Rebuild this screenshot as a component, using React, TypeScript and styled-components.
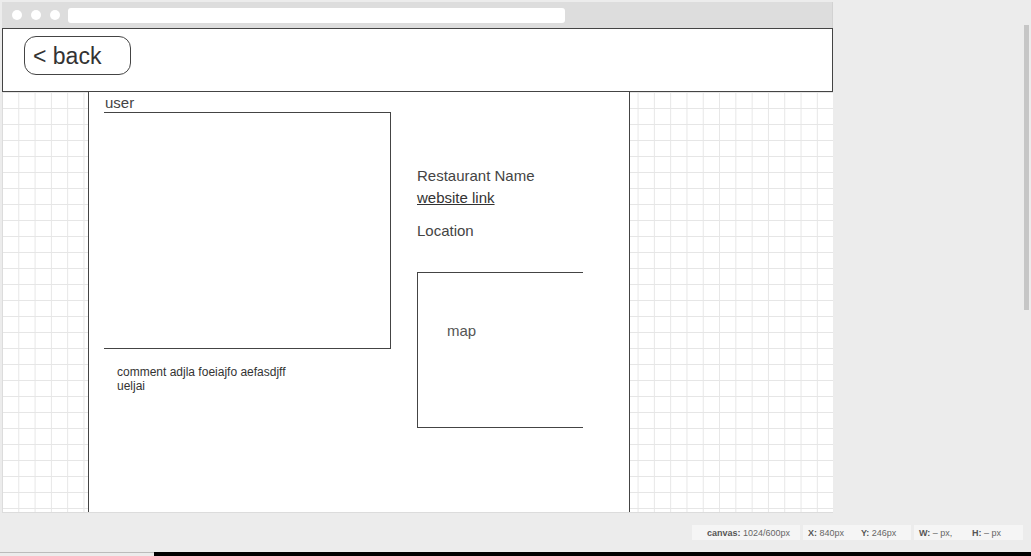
import React from "react";
import styled, { createGlobalStyle } from "styled-components";

const Global = createGlobalStyle`
  html, body { margin: 0; padding: 0; background: #ececec; }
  body { font-family: "Liberation Sans", Arial, sans-serif; color: #333; }
  * { box-sizing: border-box; }
`;

const Page = styled.div`
  width: 1031px;
  height: 556px;
  display: flex;
  flex-direction: column;
  overflow: hidden;
  background: #ececec;
`;

const TopArea = styled.div`
  display: flex;
  height: 513px;
`;

const Frame = styled.div`
  margin: 2px 0 0 2px;
  width: 831px;
  height: 511px;
  display: flex;
  flex-direction: column;
`;

const Chrome = styled.div`
  height: 26px;
  flex: none;
  background: #dddddd;
  display: flex;
  align-items: center;
  padding: 0 0 0 10px;
  gap: 9px;
  border-right: 1px solid #d2d2d2;
`;

const Dot = styled.span`
  width: 10px;
  height: 10px;
  border-radius: 50%;
  background: #fff;
`;

const Address = styled.div`
  margin-left: -1px;
  width: 497px;
  height: 15px;
  background: #fff;
  border-radius: 3px;
`;

const Header = styled.div`
  height: 64px;
  flex: none;
  background: #fff;
  border: 1px solid #444;
  padding: 7px 0 0 21px;
`;

const BackButton = styled.button`
  width: 107px;
  height: 39px;
  border: 1px solid #444;
  border-radius: 12px;
  background: #fff;
  padding: 1px 0 0 8px;
  text-align: left;
  font-family: "Liberation Sans", Arial, sans-serif;
  font-size: 23px;
  line-height: 36px;
  color: #333;
  cursor: pointer;
`;

const Canvas = styled.div`
  flex: 1;
  min-height: 0;
  border-left: 1px solid #dcdcdc;
  border-bottom: 1px solid #dcdcdc;
  background-color: #fff;
  background-image: linear-gradient(to right, #e6e6e6 1px, transparent 1px),
    linear-gradient(to bottom, #e6e6e6 1px, transparent 1px);
  background-size: 16.3px 16px;
  background-position: -1px 0;
  padding-left: 85px;
  overflow: hidden;
`;

const Card = styled.div`
  width: 542px;
  height: 100%;
  background: #fff;
  border-left: 1px solid #444;
  border-right: 1px solid #444;
  display: grid;
  grid-template-columns: 287px 1fr;
  column-gap: 26px;
  padding: 0 0 0 15px;
`;

const LeftCol = styled.div`
  display: flex;
  flex-direction: column;
  padding-top: 3px;
`;

const Label = styled.div`
  font-size: 15px;
  line-height: 16px;
  color: #444;
  padding-left: 1px;
  margin-bottom: 1px;
`;

const ImageBox = styled.div`
  height: 237px;
  border-top: 1px solid #444;
  border-right: 1px solid #444;
  border-bottom: 1px solid #444;
`;

const Comment = styled.p`
  margin: 16px 0 0 13px;
  width: 172px;
  font-size: 12px;
  line-height: 14px;
  color: #333;
`;

const RightCol = styled.div`
  display: flex;
  flex-direction: column;
  padding-top: 73px;
`;

const InfoLine = styled.div<{ $gap?: number }>`
  font-size: 15px;
  line-height: 22px;
  color: #444;
  margin-top: ${(p) => p.$gap ?? 0}px;
`;

const Link = styled.a`
  font-size: 15px;
  line-height: 22px;
  color: #333;
  text-decoration: underline;
  align-self: flex-start;
`;

const MapBox = styled.div`
  margin-top: 30px;
  width: 166px;
  height: 156px;
  border-top: 1px solid #444;
  border-left: 1px solid #444;
  border-bottom: 1px solid #444;
  padding: 49px 0 0 29px;
  font-size: 15px;
  line-height: 18px;
  color: #555;
`;

const Gutter = styled.div`
  flex: 1;
  display: flex;
  justify-content: flex-end;
  padding: 25px 2px 0 0;
`;

const ScrollThumb = styled.div`
  width: 5px;
  height: 285px;
  background: #c6c6c6;
`;

const StatusBar = styled.div`
  height: 39px;
  display: flex;
  align-items: flex-start;
  padding: 12px 0 0 692px;
  gap: 3px;
`;

const StatusPanel = styled.div<{ $w: number }>`
  width: ${(p) => p.$w}px;
  height: 15px;
  background: #f5f5f5;
  display: flex;
  align-items: center;
  font-size: 9px;
  color: #666;
  font-family: "Liberation Sans", Arial, sans-serif;
`;

const StatusItem = styled.span<{ $pad: number; $w?: number }>`
  padding-left: ${(p) => p.$pad}px;
  width: ${(p) => (p.$w ? `${p.$w}px` : "auto")};
  white-space: nowrap;
  b { font-weight: bold; color: #555; }
`;

const BottomStrip = styled.div`
  height: 4px;
  display: flex;
`;

const StripLeft = styled.div`
  width: 154px;
  border-top: 1px solid #bbb;
  background: #ececec;
`;

const StripRight = styled.div`
  flex: 1;
  background: #000;
`;

export default function App() {
  return (
    <>
      <Global />
      <Page>
        <TopArea>
          <Frame>
            <Chrome>
              <Dot />
              <Dot />
              <Dot />
              <Address />
            </Chrome>
            <Header>
              <BackButton>&lt; back</BackButton>
            </Header>
            <Canvas>
              <Card>
                <LeftCol>
                  <Label>user</Label>
                  <ImageBox />
                  <Comment>comment adjla foeiajfo aefasdjff ueljai</Comment>
                </LeftCol>
                <RightCol>
                  <InfoLine>Restaurant Name</InfoLine>
                  <Link href="#">website link</Link>
                  <InfoLine $gap={11}>Location</InfoLine>
                  <MapBox>map</MapBox>
                </RightCol>
              </Card>
            </Canvas>
          </Frame>
          <Gutter>
            <ScrollThumb />
          </Gutter>
        </TopArea>
        <StatusBar>
          <StatusPanel $w={108}>
            <StatusItem $pad={15}>
              <b>canvas:</b> 1024/600px
            </StatusItem>
          </StatusPanel>
          <StatusPanel $w={108}>
            <StatusItem $pad={5} $w={58}>
              <b>X:</b> 840px
            </StatusItem>
            <StatusItem $pad={0}>
              <b>Y:</b> 246px
            </StatusItem>
          </StatusPanel>
          <StatusPanel $w={109}>
            <StatusItem $pad={5} $w={58}>
              <b>W:</b> – px,
            </StatusItem>
            <StatusItem $pad={0}>
              <b>H:</b> – px
            </StatusItem>
          </StatusPanel>
        </StatusBar>
        <BottomStrip>
          <StripLeft />
          <StripRight />
        </BottomStrip>
      </Page>
    </>
  );
}
